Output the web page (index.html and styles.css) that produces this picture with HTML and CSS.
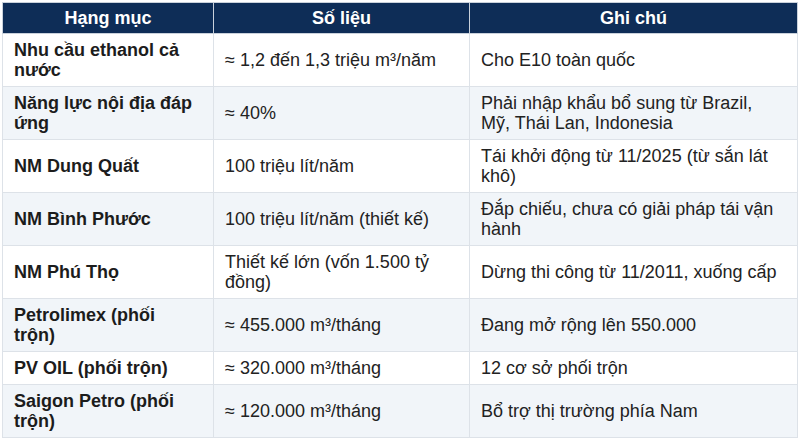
FILE: index.html
```html
<!DOCTYPE html>
<html lang="vi">
<head>
<meta charset="utf-8">
<link rel="stylesheet" href="styles.css">
</head>
<body>
<table class="data">
  <colgroup>
    <col class="c1">
    <col class="c2">
    <col class="c3">
  </colgroup>
  <thead>
    <tr><th>Hạng mục</th><th>Số liệu</th><th>Ghi chú</th></tr>
  </thead>
  <tbody>
    <tr><td class="name">Nhu cầu ethanol cả nước</td><td>≈ 1,2 đến 1,3 triệu m³/năm</td><td>Cho E10 toàn quốc</td></tr>
    <tr><td class="name">Năng lực nội địa đáp ứng</td><td>≈ 40%</td><td>Phải nhập khẩu bổ sung từ Brazil, Mỹ, Thái Lan, Indonesia</td></tr>
    <tr><td class="name">NM Dung Quất</td><td>100 triệu lít/năm</td><td>Tái khởi động từ 11/2025 (từ sắn lát khô)</td></tr>
    <tr><td class="name">NM Bình Phước</td><td>100 triệu lít/năm (thiết kế)</td><td>Đắp chiếu, chưa có giải pháp tái vận hành</td></tr>
    <tr><td class="name">NM Phú Thọ</td><td>Thiết kế lớn (vốn 1.500 tỷ đồng)</td><td>Dừng thi công từ 11/2011, xuống cấp</td></tr>
    <tr><td class="name">Petrolimex (phối trộn)</td><td>≈ 455.000 m³/tháng</td><td>Đang mở rộng lên 550.000</td></tr>
    <tr><td class="name">PV OIL (phối trộn)</td><td>≈ 320.000 m³/tháng</td><td>12 cơ sở phối trộn</td></tr>
    <tr><td class="name">Saigon Petro (phối trộn)</td><td>≈ 120.000 m³/tháng</td><td>Bổ trợ thị trường phía Nam</td></tr>
  </tbody>
</table>
</body>
</html>
```
FILE: styles.css
```css
html, body {
  margin: 0;
  background: #ffffff;
}
body {
  padding: 2px 3px 0 2px;
  font-family: "Liberation Sans", Arial, sans-serif;
}
.data {
  width: 795px;
  border-collapse: collapse;
  table-layout: fixed;
  font-size: 18px;
  line-height: 20px;
  color: #222222;
}
.c1 { width: 211px; }
.c2 { width: 256px; }
.c3 { width: 328px; }
.data th {
  background: #0e2d57;
  color: #ffffff;
  font-weight: bold;
  text-align: center;
  padding: 5px 10px;
  border: 1px solid #c9d1db;
}
.data td {
  padding: 6px 11px;
  border: 1px solid #dde2e8;
  vertical-align: middle;
  text-align: left;
}
.data tbody tr:nth-child(even) td {
  background: #f1f5f9;
}
.data td.name {
  font-weight: bold;
  color: #1c1c1c;
  padding-right: 14px;
}
```
